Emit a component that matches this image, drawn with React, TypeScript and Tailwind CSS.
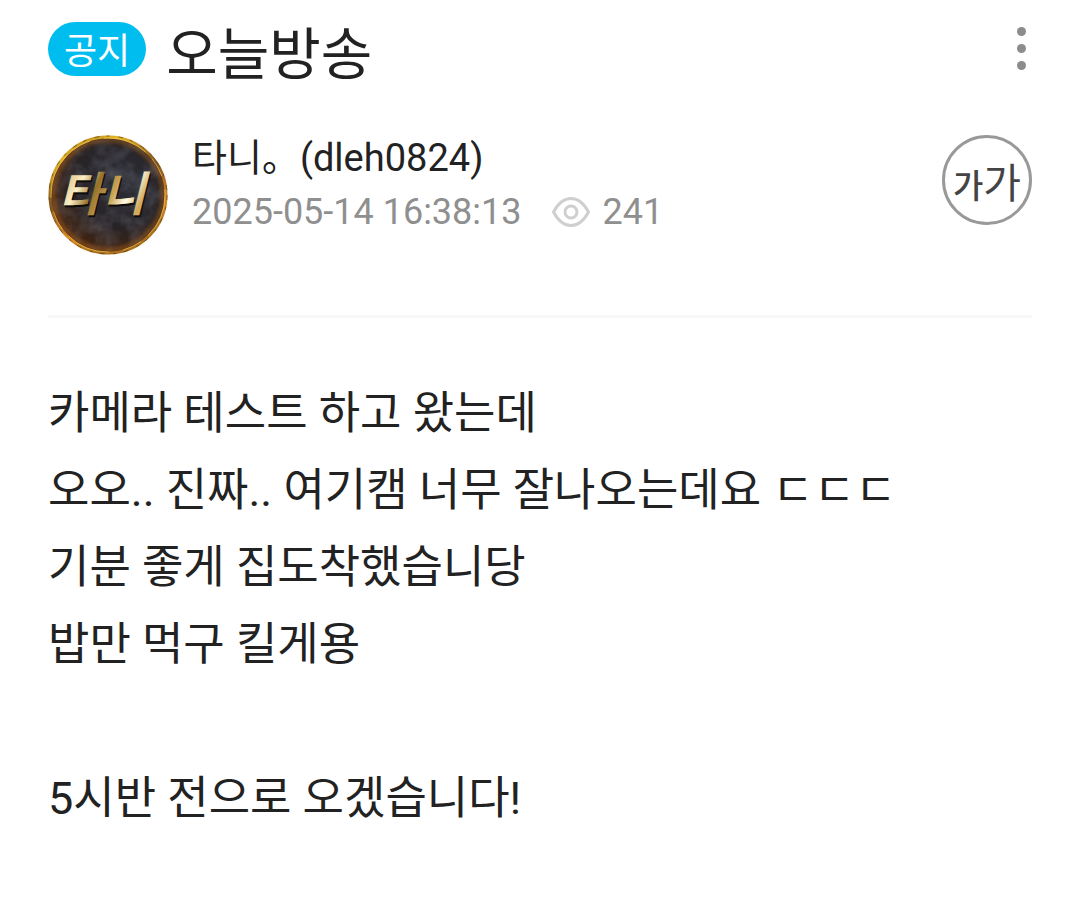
interface Post {
  badge: string;
  title: string;
  author: string;
  authorId: string;
  createdAt: string;
  views: number;
  lines: string[];
}

const post: Post = {
  badge: '공지',
  title: '오늘방송',
  author: '타니。',
  authorId: 'dleh0824',
  createdAt: '2025-05-14 16:38:13',
  views: 241,
  lines: [
    '카메라 테스트 하고 왔는데',
    '오오.. 진짜.. 여기캠 너무 잘나오는데요 ㄷㄷㄷ',
    '기분 좋게 집도착했습니당',
    '밥만 먹구 킬게용',
    '',
    '5시반 전으로 오겠습니다!',
  ],
};

function Avatar() {
  return (
    <svg viewBox="0 0 120 120" className="size-[120px] shrink-0" role="img" aria-label="타니">
      <defs>
        <linearGradient id="rim" x1="0" y1="0" x2="0.4" y2="1">
          <stop offset="0" stopColor="#8f6420" />
          <stop offset="0.2" stopColor="#e6b422" />
          <stop offset="0.5" stopColor="#80541f" />
          <stop offset="0.8" stopColor="#d98a25" />
          <stop offset="1" stopColor="#a9701d" />
        </linearGradient>
        <radialGradient id="stone" cx="0.62" cy="0.38" r="0.65">
          <stop offset="0" stopColor="#2c2e36" />
          <stop offset="0.6" stopColor="#272326" />
          <stop offset="1" stopColor="#45240f" />
        </radialGradient>
        <linearGradient id="gold" x1="0" y1="0" x2="1" y2="0.4">
          <stop offset="0" stopColor="#fff3cf" />
          <stop offset="0.2" stopColor="#e3c88f" />
          <stop offset="0.34" stopColor="#fbeec4" />
          <stop offset="0.5" stopColor="#94702a" />
          <stop offset="0.7" stopColor="#cba65a" />
          <stop offset="0.85" stopColor="#fffbe6" />
          <stop offset="1" stopColor="#d3aa5c" />
        </linearGradient>
        <filter id="grain" x="0" y="0" width="100%" height="100%">
          <feTurbulence type="fractalNoise" baseFrequency="0.06" numOctaves="4" seed="8" />
          <feColorMatrix values="0 0 0 0 0.34  0 0 0 0 0.34  0 0 0 0 0.42  0.9 0 0 0 -0.3" />
          <feComposite in2="SourceGraphic" operator="in" />
        </filter>
        <filter id="glow" x="-10%" y="-10%" width="120%" height="120%">
          <feGaussianBlur stdDeviation="2" />
        </filter>
      </defs>
      <circle cx="60" cy="60" r="59" fill="url(#stone)" />
      <circle cx="60" cy="60" r="56" fill="#000" filter="url(#grain)" opacity="0.6" />
      <circle cx="60" cy="60" r="55" fill="none" stroke="#a9611b" strokeWidth="3" opacity="0.8" filter="url(#glow)" />
      <circle cx="60" cy="60" r="58" fill="none" stroke="url(#rim)" strokeWidth="3" />
      <circle cx="60" cy="60" r="57" fill="none" stroke="#ffd35a" strokeWidth="1" strokeDasharray="45 9 20 14" opacity="0.6" />
      <circle cx="60" cy="60" r="59" fill="none" stroke="#4d3515" strokeWidth="1" strokeDasharray="5 7 3 9" opacity="0.6" />
      <g
        fontFamily="'Noto Sans CJK KR', sans-serif"
        fontSize="47"
        fontWeight="700"
        fontStyle="italic"
        textAnchor="middle"
      >
        <text x="55" y="78" fill="#0d0a08">타니</text>
        <text x="54" y="76" fill="url(#gold)">타니</text>
      </g>
    </svg>
  );
}

function EyeIcon() {
  return (
    <svg viewBox="0 0 40 32" className="h-8 w-10" fill="none" stroke="#cfcfcf" strokeWidth="3" aria-hidden="true">
      <path d="M2.500 16C7 7.500 13 2.500 20 2.500S33 7.500 37.500 16C33 24.500 27 29.500 20 29.500S7 24.500 2.500 16Z" strokeLinejoin="round" />
      <circle cx="20" cy="16" r="6" />
    </svg>
  );
}

export default function App() {
  return (
    <article className="min-h-screen bg-white px-12 pt-[22px] pb-12 font-[Roboto,'Noto_Sans_CJK_KR',sans-serif] text-[#222]">
      <header className="border-b-3 border-[#f7f7f7] pb-[60px]">
        <div className="flex items-start justify-between">
          <div className="flex items-start gap-5">
            <span className="h-[54px] rounded-full bg-[#00bdf0] px-4 text-[36px] leading-[60px] text-white">
              {post.badge}
            </span>
            <h1 className="text-[56px] leading-[66px]">{post.title}</h1>
          </div>
          <button type="button" aria-label="더보기" className="flex w-[22px] flex-col items-center gap-2 pt-[5px]">
            <span className="size-[9px] rounded-full bg-[#8c8c8c]" />
            <span className="size-[9px] rounded-full bg-[#8c8c8c]" />
            <span className="size-[9px] rounded-full bg-[#8c8c8c]" />
          </button>
        </div>

        <div className="mt-[47px] flex items-start gap-6">
          <Avatar />
          <div className="flex-1">
            <p className="text-[38px] leading-[46px]">
              {post.author}({post.authorId})
            </p>
            <div className="mt-2 flex items-center text-[36px] leading-[46px] text-[#8f8f8f]">
              <time>{post.createdAt}</time>
              <span className="ml-[29px] flex items-center gap-3">
                <EyeIcon />
                {post.views}
              </span>
            </div>
          </div>
          {/* Text size toggle */}
          <button
            type="button"
            aria-label="글자 크기"
            className="flex size-[90px] shrink-0 items-baseline justify-center rounded-full border-3 border-[#999] text-[#444]"
          >
            <span className="text-[33px] leading-[92px] font-medium">가</span>
            <span className="text-[41px] leading-[92px]">가</span>
          </button>
        </div>
      </header>

      <div className="pt-[57px] text-[45px] leading-[77px]">
        {post.lines.map((line, i) => (
          <p key={i} className="min-h-[77px]">
            {line}
          </p>
        ))}
      </div>
    </article>
  );
}
